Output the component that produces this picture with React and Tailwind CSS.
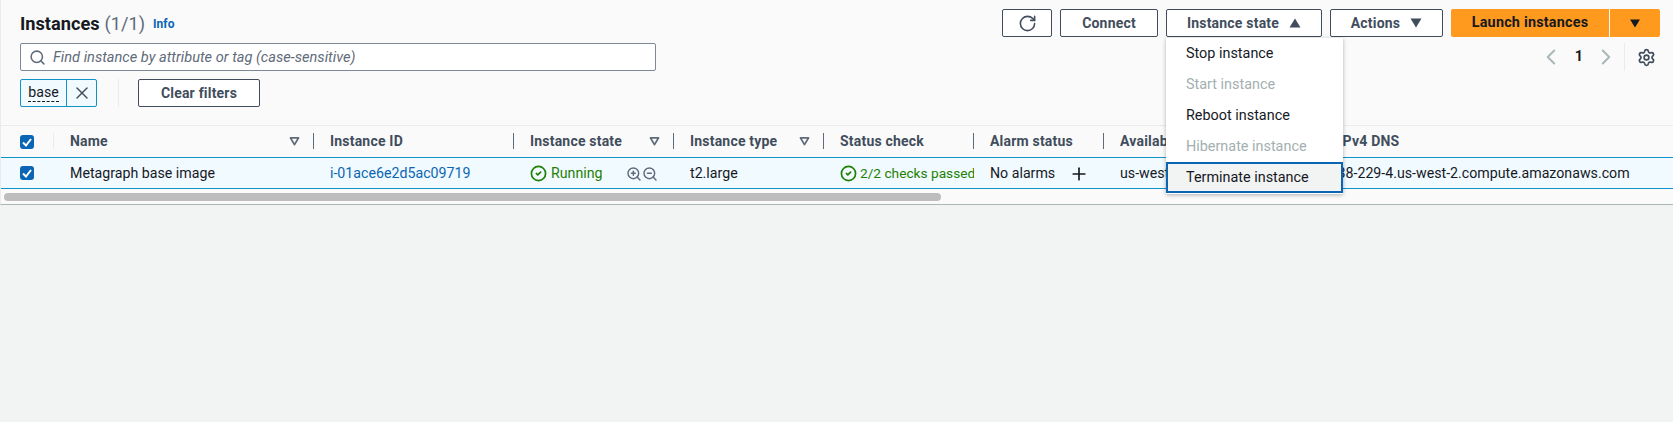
import { Search, X, RotateCw, ChevronLeft, ChevronRight, Settings, ZoomIn, ZoomOut, Plus, CircleCheck } from 'lucide-react';

const Tri = ({ up, className }) => (
  <svg viewBox="0 0 12 10" className={className} fill="currentColor">
    <path d={up ? 'M6 0.5 L11.5 9.5 L0.5 9.5 Z' : 'M0.5 0.5 L11.5 0.5 L6 9.5 Z'} />
  </svg>
);

const FilterIcon = () => (
  <svg viewBox="0 0 12 10" className="h-[9px] w-[11px] text-[#5f6b7a]" fill="none" stroke="currentColor" strokeWidth="2">
    <path d="M1.5 1 L10.5 1 L6 8.5 Z" strokeLinejoin="round" />
  </svg>
);

const Checkbox = () => (
  <span className="flex h-[14px] w-[14px] items-center justify-center rounded-[3px] bg-[#0a66b4]">
    <svg viewBox="0 0 14 14" className="h-[14px] w-[14px]" fill="none" stroke="white" strokeWidth="2">
      <path d="M3 7.5 L6 10.5 L11 4" />
    </svg>
  </span>
);

const OutlineButton = ({ className = '', children }) => (
  <button className={`flex h-[28px] items-center justify-center rounded-[2px] border border-[#414d5c] bg-white text-[14px] font-bold tracking-[0.2px] text-[#414d5c] ${className}`}>
    {children}
  </button>
);

const Header = ({ label, filter, divider = true, className = '' }) => (
  <div className="relative flex h-full min-w-0 items-center pl-[16px] pr-[14px]">
    <span className={`overflow-hidden whitespace-nowrap text-[14px] font-bold tracking-[0.2px] text-[#414d5c] ${className}`}>{label}</span>
    {filter && <span className="ml-auto flex"><FilterIcon /></span>}
    {divider && <span className="absolute right-0 top-[7px] h-[16px] w-px bg-[#5f6b7a]" />}
  </div>
);

const Cell = ({ className = 'text-[#16191f]', children }) => (
  <div className={`flex h-full items-center overflow-hidden whitespace-nowrap pl-[16px] pt-[1px] text-[14.2px] ${className}`}>
    {children}
  </div>
);

const COLS = 'grid-cols-[53px_260px_200px_160px_150px_150px_130px_143px_1fr]';

const MenuItem = ({ label, disabled, focus }) => (
  <div
    className={
      focus
        ? 'flex h-[31px] items-center border-2 border-[#0a66b4] bg-[#f2f3f3] pl-[18px] text-[14.4px] text-[#16191f]'
        : `flex h-[31px] items-center pl-[20px] text-[14.4px] ${disabled ? 'text-[#a3afb0]' : 'text-[#16191f]'}`
    }
  >
    {label}
  </div>
);

export default function App() {
  return (
    <div className="relative flex h-[422px] w-[1673px] flex-col overflow-hidden bg-[#f2f3f3] font-['Roboto',sans-serif]">
      <div className="h-[205px] border-b border-[#aab7b8] border-l border-l-[#e9ebed] bg-[#fafafa]">
        <div className="flex h-[125px] justify-between pl-[19px] pr-[13px]">
          <div className="w-[636px]">
            <div className="flex h-[43px] items-center pt-[4px]">
              <h1 className="text-[18.2px] font-bold text-[#16191f]">Instances</h1>
              <span className="ml-[5px] text-[18.2px] text-[#5f6b7a]">(1/1)</span>
              <span className="ml-[8px] text-[12px] font-bold text-[#0a66b4]">Info</span>
            </div>
            <div className="flex h-[28px] items-center gap-[7px] rounded-[2px] border border-[#7d8998] bg-white pl-[8px]">
              <Search className="h-[17px] w-[17px] text-[#5f6b7a]" strokeWidth={2.2} />
              <span className="pt-[1px] text-[14.6px] italic text-[#5f6b7a]">Find instance by attribute or tag (case-sensitive)</span>
            </div>
            <div className="mt-[8px] flex h-[28px] items-center">
              <div className="flex h-full w-[77px] rounded-[2px] border border-[#0f93c8] bg-[#f1faff]">
                <span className="flex w-[46px] items-center justify-center border-r border-[#0f93c8]">
                  <span className="border-b border-dashed border-[#16191f] text-[14.2px] leading-[17px] text-[#16191f]">base</span>
                </span>
                <span className="flex flex-1 items-center justify-center">
                  <X className="h-[20px] w-[20px] text-[#414d5c]" strokeWidth={1.7} />
                </span>
              </div>
              <span className="ml-[21px] h-full w-px bg-[#e9ebed]" />
              <OutlineButton className="ml-[19px] w-[122px]">Clear filters</OutlineButton>
            </div>
          </div>
          <div className="w-[658px]">
            <div className="flex gap-[8px] pt-[9px]">
              <OutlineButton className="w-[50px]"><RotateCw className="h-[19px] w-[19px]" strokeWidth={2} /></OutlineButton>
              <OutlineButton className="w-[98px]">Connect</OutlineButton>
              <OutlineButton className="w-[156px] gap-[10px]">Instance state <Tri up className="h-[10px] w-[12px]" /></OutlineButton>
              <OutlineButton className="w-[113px] gap-[10px]">Actions <Tri className="h-[10px] w-[12px]" /></OutlineButton>
              <div className="flex gap-px">
                <button className="h-[28px] w-[158px] rounded-l-[2px] bg-[#ff9a1f] text-[14.4px] font-bold tracking-[0.2px] text-[#16191f]">Launch instances</button>
                <button className="flex h-[28px] w-[50px] items-center justify-center rounded-r-[2px] bg-[#ff9a1f] text-[#16191f]"><Tri className="h-[9px] w-[12px]" /></button>
              </div>
            </div>
            <div className="mt-[6px] flex h-[28px] items-center justify-end pr-[4px]">
              <ChevronLeft className="h-[26px] w-[26px] text-[#aab7b8]" strokeWidth={1.8} />
              <span className="ml-[11px] text-[14.4px] font-bold text-[#16191f]">1</span>
              <ChevronRight className="ml-[10px] h-[26px] w-[26px] text-[#aab7b8]" strokeWidth={1.8} />
              <span className="ml-[5px] h-[28px] w-px bg-[#e9ebed]" />
              <Settings className="ml-[12px] h-[19px] w-[19px] text-[#414d5c]" strokeWidth={2.2} />
            </div>
          </div>
        </div>

        <div className={`grid h-[32px] border-t border-[#e9ebed] ${COLS}`}>
          <div className="relative flex items-center pl-[19px]">
            <Checkbox />
            <span className="absolute right-0 top-[7px] h-[16px] w-px bg-[#e9ebed]" />
          </div>
          <Header label="Name" filter />
          <Header label="Instance ID" />
          <Header label="Instance state" filter />
          <Header label="Instance type" filter />
          <Header label="Status check" />
          <Header label="Alarm status" />
          <Header label="Availability Zone" divider={false} />
          <Header label="Public IPv4 DNS" divider={false} className="ml-[31px]" />
        </div>

        <div className={`grid h-[32px] border-y border-[#0f93c8] bg-[#f1faff] ${COLS}`}>
          <div className="flex items-center pl-[19px]"><Checkbox /></div>
          <Cell>Metagraph base image</Cell>
          <Cell className="text-[#0a66b4]">i-01ace6e2d5ac09719</Cell>
          <Cell className="text-[#1d8102]">
            <CircleCheck className="mr-[4px] h-[17px] w-[17px]" strokeWidth={2.4} />
            Running
            <ZoomIn className="ml-[23px] h-[16px] w-[16px] text-[#5f6b7a]" strokeWidth={2.2} />
            <ZoomOut className="h-[16px] w-[16px] text-[#5f6b7a]" strokeWidth={2.2} />
          </Cell>
          <Cell>t2.large</Cell>
          <Cell className="text-[#1d8102]">
            <CircleCheck className="mr-[3px] h-[17px] w-[17px] shrink-0" strokeWidth={2.4} />
            <span className="text-[13.7px]">2/2 checks passed</span>
          </Cell>
          <Cell>
            No alarms
            <Plus className="ml-[14px] h-[20px] w-[20px] text-[#16191f]" strokeWidth={2} />
          </Cell>
          <Cell>us-west-2a</Cell>
          <Cell>ec2-34-217-38-229-4.us-west-2.compute.amazonaws.com</Cell>
        </div>

        <div className="pl-[3px] pt-[4px]">
          <div className="h-[8px] w-[937px] rounded-full bg-[#bdbdbd]" />
        </div>
      </div>

      <div className="absolute left-[1166px] top-[38px] w-[177px] bg-white shadow-[0_1px_4px_rgba(0,0,0,0.3)]">
        <div className="pb-[1px]">
          <MenuItem label="Stop instance" />
          <MenuItem label="Start instance" disabled />
          <MenuItem label="Reboot instance" />
          <MenuItem label="Hibernate instance" disabled />
          <MenuItem label="Terminate instance" focus />
        </div>
      </div>
    </div>
  );
}
